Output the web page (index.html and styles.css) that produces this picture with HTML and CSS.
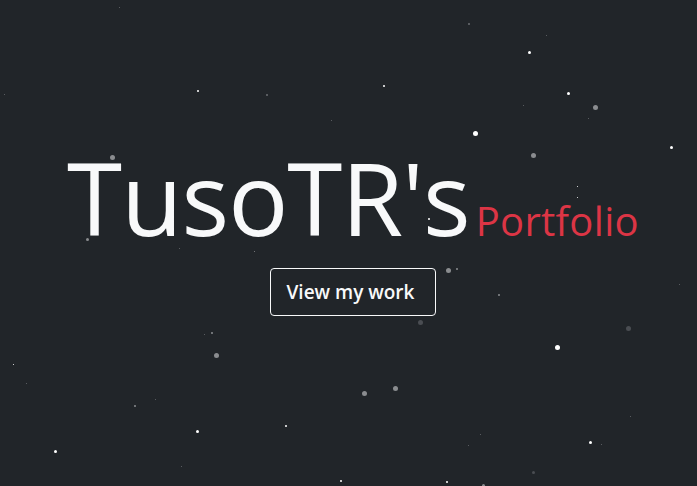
FILE: index.html
```html
<!DOCTYPE html>
<html lang="en">
<head>
<meta charset="utf-8">
<title>TusoTR's Portfolio</title>
<link rel="stylesheet" href="styles.css">
</head>
<body>
<div class="stars" aria-hidden="true">
  <i class="s w m" style="left:528px;top:51px"></i>
  <i class="s w m" style="left:567px;top:92px"></i>
  <i class="s g l" style="left:593px;top:105px"></i>
  <i class="s w l" style="left:473px;top:131px"></i>
  <i class="s g l" style="left:531px;top:153px"></i>
  <i class="s w m" style="left:670px;top:146px"></i>
  <i class="s g l" style="left:110px;top:155px"></i>
  <i class="s w t" style="left:197px;top:90px"></i>
  <i class="s d t" style="left:266px;top:94px"></i>
  <i class="s w t" style="left:383px;top:85px"></i>
  <i class="s d t" style="left:468px;top:23px"></i>
  <i class="s d x" style="left:4px;top:94px"></i>
  <i class="s d x" style="left:119px;top:7px"></i>
  <i class="s d x" style="left:546px;top:35px"></i>
  <i class="s d x" style="left:523px;top:105px"></i>
  <i class="s d x" style="left:588px;top:118px"></i>
  <i class="s w x" style="left:577px;top:186px"></i>
  <i class="s w x" style="left:577px;top:197px"></i>
  <i class="s w t" style="left:428px;top:218px"></i>
  <i class="s g m" style="left:86px;top:238px"></i>
  <i class="s d x" style="left:179px;top:248px"></i>
  <i class="s g x" style="left:254px;top:251px"></i>
  <i class="s w x" style="left:313px;top:223px"></i>
  <i class="s g l" style="left:446px;top:268px"></i>
  <i class="s g t" style="left:456px;top:268px"></i>
  <i class="s g t" style="left:498px;top:294px"></i>
  <i class="s d x" style="left:679px;top:284px"></i>
  <i class="s f l" style="left:418px;top:320px"></i>
  <i class="s f l" style="left:626px;top:326px"></i>
  <i class="s g t" style="left:211px;top:332px"></i>
  <i class="s d x" style="left:204px;top:334px"></i>
  <i class="s g l" style="left:214px;top:353px"></i>
  <i class="s w l" style="left:555px;top:345px"></i>
  <i class="s w x" style="left:13px;top:364px"></i>
  <i class="s d x" style="left:26px;top:383px"></i>
  <i class="s g t" style="left:134px;top:405px"></i>
  <i class="s g l" style="left:362px;top:391px"></i>
  <i class="s g l" style="left:393px;top:386px"></i>
  <i class="s w m" style="left:196px;top:430px"></i>
  <i class="s w m" style="left:54px;top:450px"></i>
  <i class="s w t" style="left:285px;top:425px"></i>
  <i class="s d x" style="left:630px;top:416px"></i>
  <i class="s w m" style="left:589px;top:441px"></i>
  <i class="s d x" style="left:601px;top:444px"></i>
  <i class="s d x" style="left:480px;top:434px"></i>
  <i class="s d x" style="left:468px;top:445px"></i>
  <i class="s d x" style="left:181px;top:466px"></i>
  <i class="s f m" style="left:532px;top:471px"></i>
  <i class="s w t" style="left:340px;top:480px"></i>
  <i class="s w t" style="left:446px;top:481px"></i>
  <i class="s g m" style="left:482px;top:484px"></i>
  <i class="s d x" style="left:155px;top:399px"></i>
  <i class="s d x" style="left:331px;top:120px"></i>
</div>
<main class="hero">
  <h1 class="title">TusoTR's<span class="subtitle">Portfolio</span></h1>
  <a class="btn" href="#work">View my work</a>
</main>
</body>
</html>
```

FILE: styles.css
```css
html, body {
  margin: 0;
  padding: 0;
  height: 100%;
}
body {
  background: #212529;
  color: #f8f9fa;
  font-family: "Open Sans", "Noto Sans", sans-serif;
  overflow: hidden;
  position: relative;
}
.stars {
  position: absolute;
  inset: 0;
  pointer-events: none;
}
.s {
  position: absolute;
  display: block;
  border-radius: 50%;
  background: #fff;
}
.s.w { background: #ffffff; }
.s.g { background: #8a8c8f; }
.s.f { background: #4a4d52; }
.s.d { background: #6b6e72; }
.s.x { width: 1px; height: 1px; }
.s.t { width: 2px; height: 2px; }
.s.m { width: 3px; height: 3px; }
.s.l { width: 5px; height: 5px; }

.hero {
  position: relative;
  height: 100%;
  display: flex;
  flex-direction: column;
  align-items: center;
  justify-content: flex-start;
  padding-top: 147px;
  padding-left: 9px;
  box-sizing: border-box;
}
.title {
  margin: 0;
  font-weight: 400;
  font-size: 100px;
  line-height: 1;
  letter-spacing: -1px;
  display: flex;
  align-items: baseline;
  color: #f8f9fa;
}
.subtitle {
  font-size: 40px;
  color: #dc3545;
  margin-left: 6px;
  letter-spacing: 0.3px;
}
.btn {
  margin-top: 21px;
  display: inline-block;
  padding: 10px 21px 10px 16px;
  border: 1px solid #f8f9fa;
  border-radius: 4px;
  color: #f8f9fa;
  text-decoration: none;
  font-size: 19px;
  font-weight: 600;
  line-height: 26px;
}
```
